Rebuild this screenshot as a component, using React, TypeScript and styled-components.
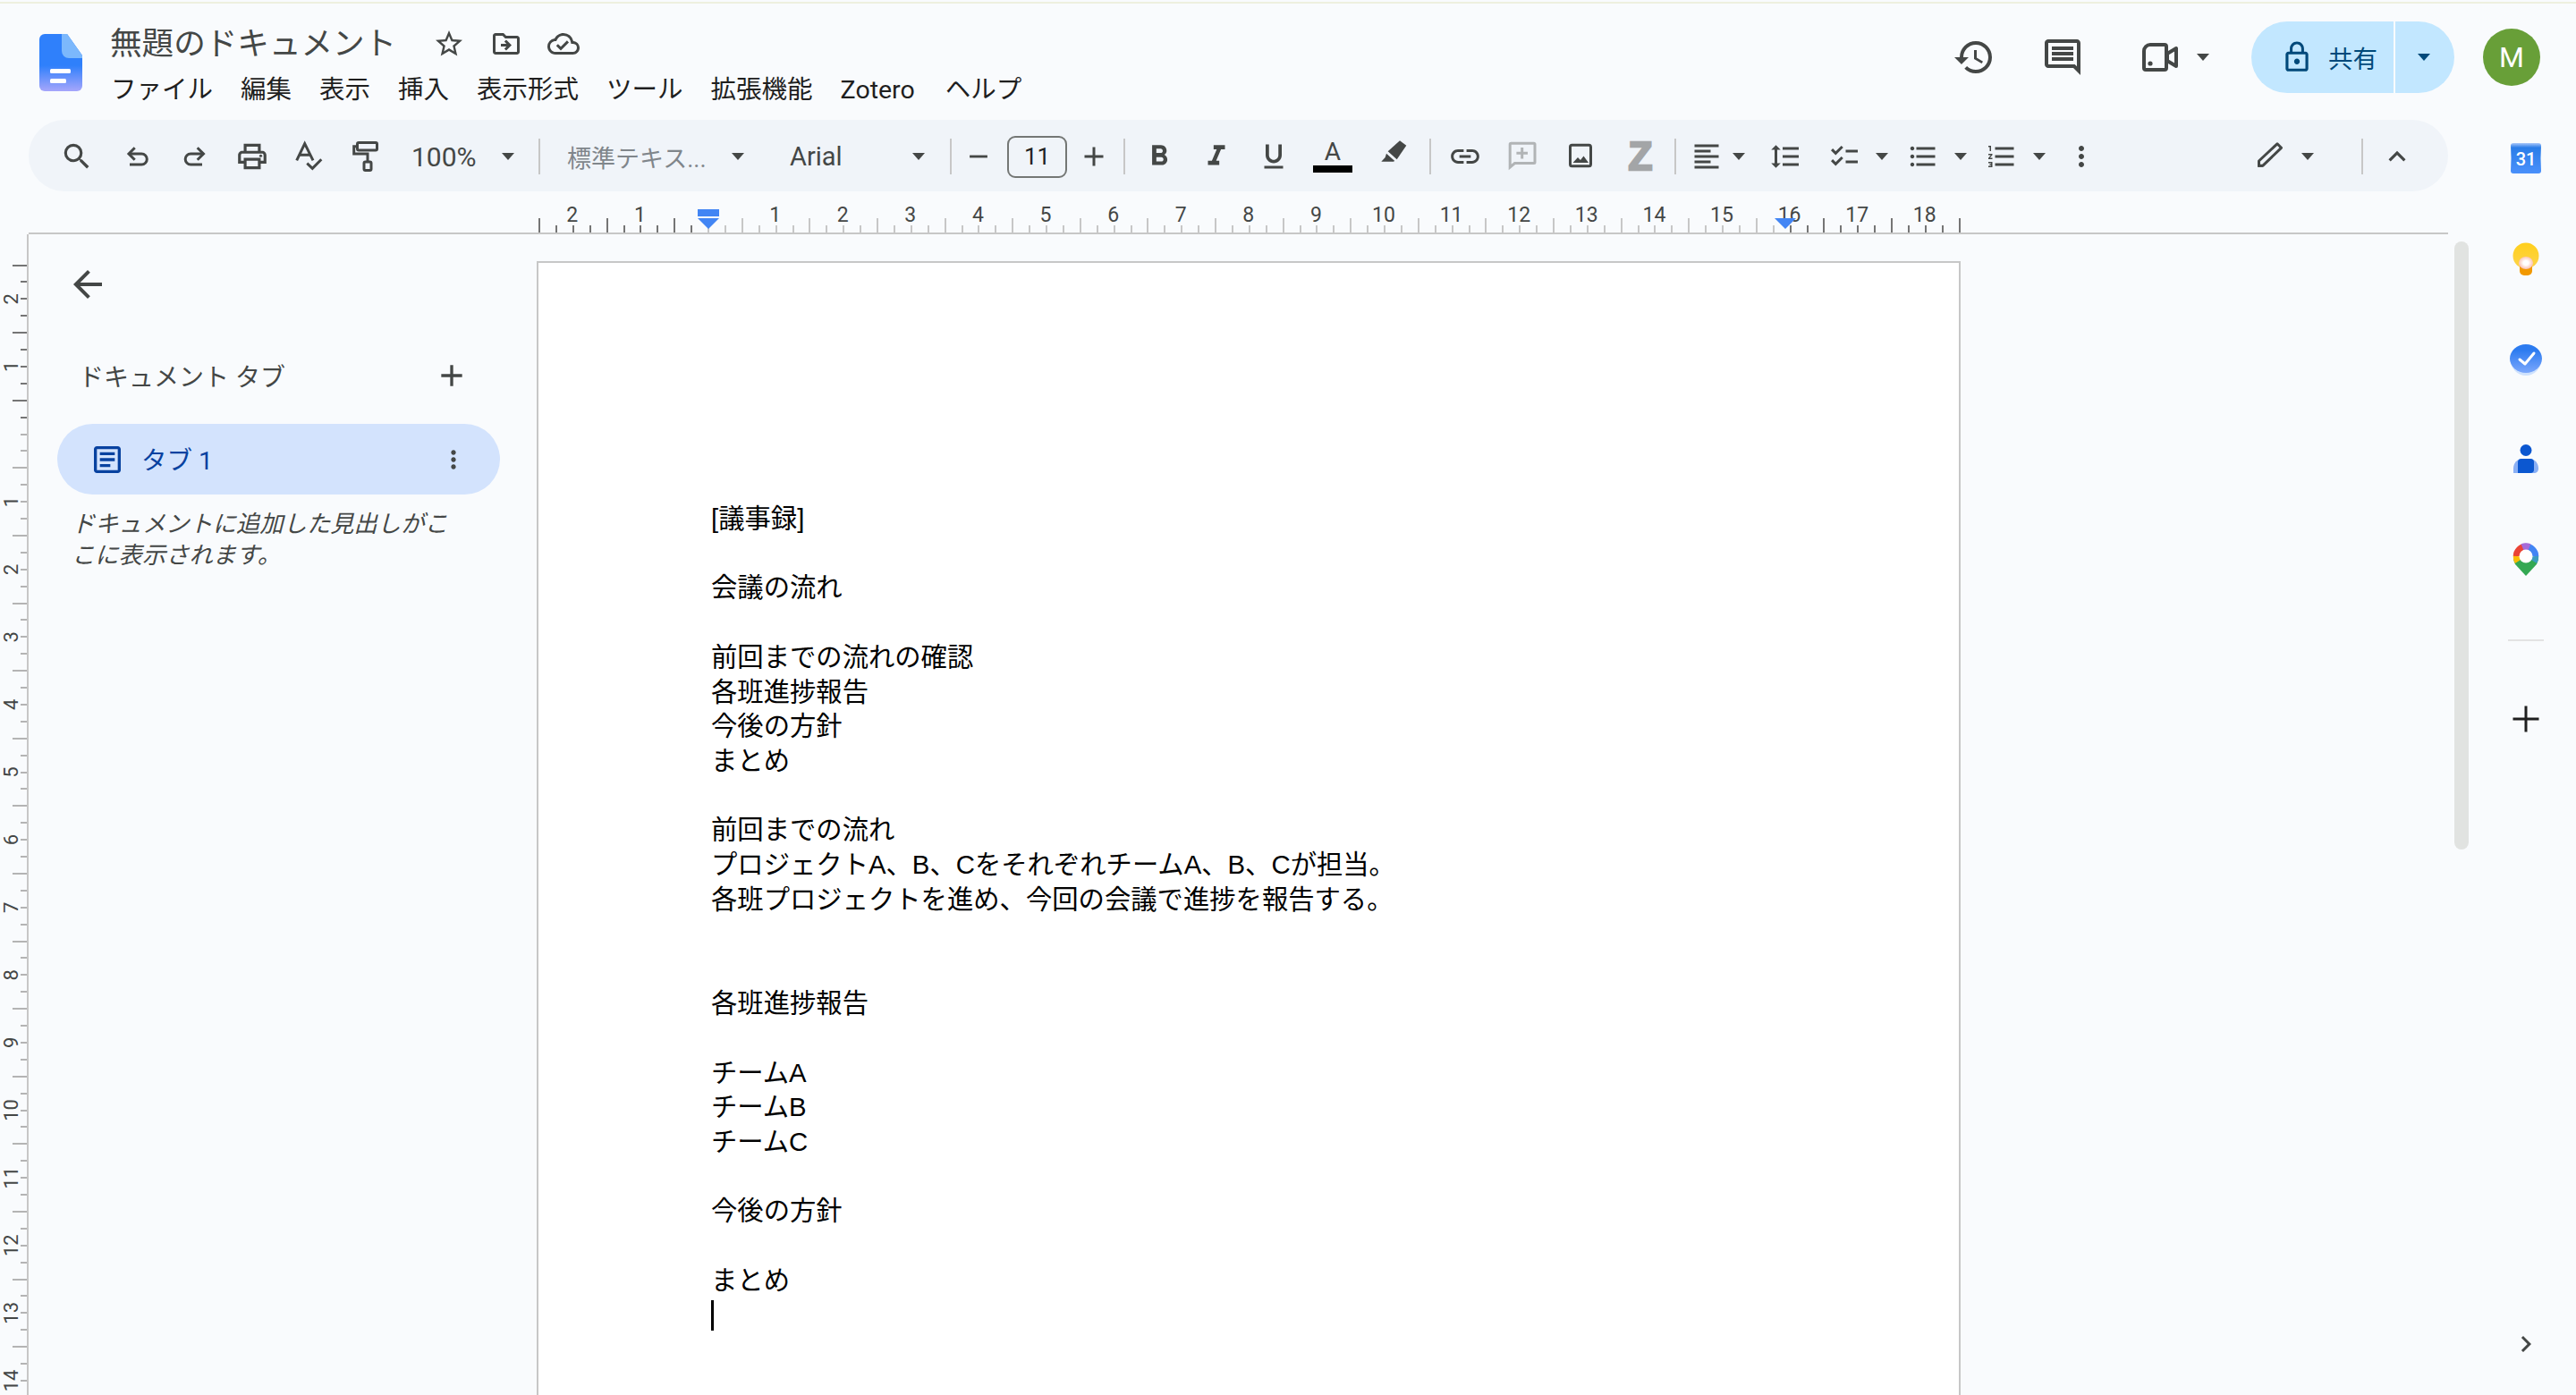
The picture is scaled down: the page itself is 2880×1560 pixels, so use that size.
import * as React from 'react';
import {
  MdAdd,
  MdArrowBack,
  MdChecklist,
  MdChevronRight,
  MdFormatAlignLeft,
  MdFormatBold,
  MdFormatItalic,
  MdFormatLineSpacing,
  MdFormatListBulleted,
  MdFormatListNumbered,
  MdFormatUnderlined,
  MdHistory,
  MdKeyboardArrowUp,
  MdLink,
  MdLockOutline,
  MdMoreVert,
  MdOutlineArticle,
  MdOutlineCloudDone,
  MdOutlineComment,
  MdOutlineDriveFileMove,
  MdOutlinePrint,
  MdRemove,
  MdSearch,
  MdStarBorder,
} from 'react-icons/md';
import styled, { createGlobalStyle } from 'styled-components';

const UI_FONT = '"Roboto", "Noto Sans CJK JP", sans-serif';
const DOC_FONT = '"Liberation Sans", "Noto Sans CJK JP", sans-serif';
const ICON = '#444746';

const GlobalStyle = createGlobalStyle`
  html, body {
    margin: 0;
    padding: 0;
    background: #f9fbfd;
    overflow: hidden;
  }
`;

const Shell = styled.div`
  display: flex;
  flex-direction: column;
  width: 2880px;
  height: 1560px;
  overflow: hidden;
  background: #f9fbfd;
  font-family: ${UI_FONT};
  color: ${ICON};
`;

const TopStrip = styled.div`
  height: 2px;
  margin-top: 2px;
  flex: none;
  background: #eef0df;
`;

const Header = styled.header`
  display: flex;
  flex: none;
  height: 130px;
  padding: 20px 40px 0 44px;
  box-sizing: border-box;
`;

const LogoWrap = styled.div`
  flex: none;
  width: 48px;
  height: 64px;
  margin-top: 14px;
`;

const TitleBlock = styled.div`
  display: flex;
  flex-direction: column;
  margin-left: 31px;
`;

const TitleRow = styled.div`
  display: flex;
  align-items: center;
  gap: 28px;
  height: 46px;
  margin-top: 2px;
`;

const DocTitle = styled.div`
  width: 318px;
  margin-right: 15px;
  font-size: 35.6px;
  line-height: 46px;
  white-space: nowrap;
  color: #444746;
`;

const MenuBar = styled.nav`
  display: flex;
  gap: 31px;
  margin: 10px 0 0 1px;
  font-size: 28.5px;
  line-height: 38px;
  color: #1f1f1f;
  white-space: nowrap;
`;

const MenuItem = styled.span<{ $latin?: boolean }>`
  margin-right: ${(p) => (p.$latin ? 3 : 0)}px;
`;

const HeaderActions = styled.div`
  display: flex;
  align-items: center;
  height: 80px;
  margin-left: auto;
`;

const HeaderIcon = styled.div<{ $w: number }>`
  display: flex;
  align-items: center;
  justify-content: center;
  width: ${(p) => p.$w}px;
`;

const VideoGroup = styled.div`
  display: flex;
  align-items: center;
  gap: 17px;
  padding-left: 35px;
  margin-right: 47px;
`;

const ShareButton = styled.div`
  display: flex;
  width: 227px;
  height: 80px;
  border-radius: 40px;
  overflow: hidden;
  background: #c2e7ff;
  color: #00497a;
`;

const ShareMain = styled.div`
  display: flex;
  align-items: center;
  gap: 16px;
  width: 161px;
  padding-left: 32px;
  box-sizing: border-box;
  border-right: 2px solid #f9fbfd;
  font-size: 27.5px;
`;

const ShareCaret = styled.div`
  display: flex;
  flex: 1;
  align-items: center;
  justify-content: center;
  padding-right: 3px;
`;

const Avatar = styled.div`
  display: flex;
  align-items: center;
  justify-content: center;
  width: 64px;
  height: 64px;
  margin-left: 32px;
  border-radius: 50%;
  background: #689f38;
  color: #fff;
  font-size: 32px;
`;

const Caret = styled.span<{ $color?: string }>`
  flex: none;
  display: block;
  width: 0;
  height: 0;
  border-left: 7.5px solid transparent;
  border-right: 7.5px solid transparent;
  border-top: 8px solid ${(p) => p.$color || ICON};
`;

const Body = styled.div`
  display: flex;
  flex: 1;
  min-height: 0;
`;

const MainColumn = styled.div`
  display: flex;
  flex-direction: column;
  flex: none;
  width: 2768px;
  min-height: 0;
`;

const Toolbar = styled.div`
  display: flex;
  align-items: center;
  flex: none;
  width: 2705px;
  height: 80px;
  margin-left: 32px;
  padding: 2px 0 0 22px;
  box-sizing: border-box;
  border-radius: 40px;
  background: #f0f4f9;
`;

const Tool = styled.div<{ $w: number }>`
  display: flex;
  flex: none;
  align-items: center;
  justify-content: center;
  width: ${(p) => p.$w}px;
  height: 50px;
`;

const ToolGroup = styled.div<{ $w: number; $pl: number; $gap?: number }>`
  display: flex;
  flex: none;
  align-items: center;
  gap: ${(p) => p.$gap ?? 17}px;
  width: ${(p) => p.$w}px;
  height: 50px;
  padding-left: ${(p) => p.$pl}px;
  box-sizing: border-box;
`;

const Select = styled.div<{ $w: number; $pl: number; $caretGap: number; $size: number }>`
  display: flex;
  flex: none;
  align-items: center;
  gap: ${(p) => p.$caretGap}px;
  width: ${(p) => p.$w}px;
  padding-left: ${(p) => p.$pl}px;
  box-sizing: border-box;
  font-size: ${(p) => p.$size}px;
  white-space: nowrap;
`;

const MutedLabel = styled.span`
  color: #80868b;
`;

const Sep = styled.div<{ $ml?: number }>`
  flex: none;
  width: 2px;
  height: 40px;
  margin-left: ${(p) => p.$ml ?? 0}px;
  background: #c7c7c7;
`;

const SizeBox = styled.div`
  display: flex;
  flex: none;
  align-items: center;
  justify-content: center;
  width: 67px;
  height: 47px;
  margin-left: 2px;
  box-sizing: border-box;
  border: 2px solid #747775;
  border-radius: 9px;
  font-size: 26px;
  color: #1f1f1f;
`;

const TextColor = styled.div`
  display: flex;
  flex: none;
  flex-direction: column;
  align-items: center;
  width: 56px;
  font-size: 28px;
  line-height: 26px;
`;

const ColorBar = styled.div`
  width: 44px;
  height: 8px;
  margin-top: 2px;
  background: #000;
`;

const ZoteroMark = styled.div`
  font-family: 'Liberation Sans', sans-serif;
  font-weight: 700;
  font-size: 44px;
  line-height: 50px;
  color: #a3a5a7;
  -webkit-text-stroke: 2.5px #a3a5a7;
`;

const ToolbarRight = styled.div`
  display: flex;
  align-items: center;
  margin-left: auto;
  padding-right: 19px;
`;

const RulerRow = styled.div`
  flex: none;
  height: 48px;
  line-height: 0;
`;

const Workspace = styled.div`
  display: flex;
  flex: 1;
  min-height: 0;
  overflow: hidden;
`;

const VerticalRuler = styled.div`
  flex: none;
  width: 32px;
  line-height: 0;
`;

const Sidebar = styled.aside`
  display: flex;
  flex: none;
  flex-direction: column;
  width: 568px;
  padding-top: 32px;
  box-sizing: border-box;
`;

const BackButton = styled.div`
  display: flex;
  margin-left: 42px;
  height: 48px;
`;

const SideHeading = styled.div`
  display: flex;
  align-items: center;
  justify-content: space-between;
  width: 437px;
  height: 40px;
  margin: 58px 0 0 56px;
  font-size: 28px;
  color: #444746;
`;

const TabPill = styled.div`
  display: flex;
  align-items: center;
  width: 495px;
  height: 79px;
  margin: 34px 0 0 32px;
  padding-left: 36px;
  box-sizing: border-box;
  border-radius: 40px;
  background: #d3e3fd;
  color: #0842a0;
  font-size: 28.5px;
`;

const TabLabel = styled.span`
  flex: 1;
  margin: 0 0 3px 18px;
`;

const TabMenu = styled.span`
  display: flex;
  margin-right: 36px;
  color: #444746;
`;

const SideHint = styled.p`
  width: 430px;
  margin: 16px 0 0 48px;
  font-size: 26.3px;
  line-height: 35px;
  font-style: italic;
  color: #444746;
`;

const Page = styled.main`
  flex: none;
  width: 1592px;
  height: 1400px;
  margin-top: 30px;
  padding: 267px 0 0 193px;
  box-sizing: border-box;
  background: #fff;
  border: 2px solid #c7c7c7;
  font-family: ${DOC_FONT};
  font-size: 29.33px;
  line-height: 38.73px;
  color: #000;
`;

const DocLine = styled.div`
  height: 38.73px;
  white-space: pre;
`;

const TextCursor = styled.div`
  width: 3px;
  height: 34px;
  margin-top: 2px;
  background: #000;
`;

const ScrollTrack = styled.div`
  flex: none;
  width: 16px;
  margin: 8px 8px 0 auto;
`;

const ScrollThumb = styled.div`
  height: 680px;
  border-radius: 8px;
  background: #e1e3e1;
`;

const Rail = styled.aside`
  display: flex;
  flex: 1;
  flex-direction: column;
  align-items: center;
  gap: 76px;
  padding: 25px 0 39px;
  box-sizing: border-box;
`;

const RailIcon = styled.div`
  display: flex;
  width: 36px;
  height: 36px;
  flex: none;
`;

const RailDivider = styled.div`
  width: 40px;
  height: 2px;
  margin: -4px 0 -7px;
  background: #e3e3e3;
`;

const RailBottom = styled.div`
  display: flex;
  margin-top: auto;
`;

const DocsLogo = () => (
  <svg width="48" height="64" viewBox="0 0 48 64">
    <defs>
      <linearGradient id="docsBody" x1="0" y1="0" x2="0" y2="1">
        <stop offset="0.55" stopColor="#2f80fb" />
        <stop offset="1" stopColor="#a6a6fb" />
      </linearGradient>
    </defs>
    <path d="M6 0h25l17 24v34a6 6 0 0 1-6 6H6a6 6 0 0 1-6-6V6a6 6 0 0 1 6-6z" fill="url(#docsBody)" />
    <path d="M25 0h6l17 24v3H33a8 8 0 0 1-8-8z" fill="#7cb8fc" />
    <rect x="12" y="39" width="23" height="5" rx="1.5" fill="#fff" />
    <rect x="12" y="50" width="18" height="5" rx="1.5" fill="#fff" />
  </svg>
);

const VideoIcon = () => (
  <svg width="48" height="48" viewBox="0 0 48 48" fill="none" stroke={ICON} strokeWidth="4" strokeLinejoin="round">
    <path d="M13 10h16a2 2 0 0 1 2 2v24a2 2 0 0 1-2 2H8a2 2 0 0 1-2-2V17a7 7 0 0 1 7-7z" />
    <path d="M32 20l10-6v20l-10-6z" />
    <circle cx="13" cy="31" r="2.6" fill={ICON} stroke="none" />
  </svg>
);

const UndoIcon = () => (
  <svg width="36" height="36" viewBox="0 0 36 36" fill="none" stroke={ICON} strokeWidth="3">
    <path d="M14.7 8.3L8 15l6.7 6.7" />
    <path d="M8 15h14.3a6 6 0 0 1 0 12H9" />
  </svg>
);

const RedoIcon = () => (
  <svg width="36" height="36" viewBox="0 0 36 36" fill="none" stroke={ICON} strokeWidth="3">
    <path d="M21.7 8.3L28.5 15l-6.8 6.7" />
    <path d="M28.5 15H14.2a6 6 0 0 0 0 12H27" />
  </svg>
);

const SpellcheckIcon = () => (
  <svg width="36" height="36" viewBox="0 0 36 36" fill="none" stroke={ICON} strokeWidth="3">
    <path d="M3.7 22.3L12.7 3.7 22 22.3M7 16.3h11.7" />
    <path d="M15.3 25.7l6 5.6 10-10" />
  </svg>
);

const PaintIcon = () => (
  <svg width="36" height="36" viewBox="0 0 36 36" fill="none" stroke={ICON} strokeWidth="3">
    <rect x="10.5" y="2.5" width="22" height="8.5" rx="1.5" />
    <path d="M10 6.7H6.7V15H22v8.7" />
    <rect x="18" y="24" width="8" height="9.5" rx="1.5" />
  </svg>
);

const HighlightIcon = () => (
  <svg width="36" height="36" viewBox="0 -2 36 36" fill={ICON}>
    <path d="M25-1.7l7.3 5.4L21.7 19.3l-10-9z" />
    <path d="M10 12.7l9.3 8.3-1.5.7H4.3L8.7 17z" />
  </svg>
);

const AddCommentIcon = () => (
  <svg width="36" height="36" viewBox="0 0 36 36" fill="none" stroke="#b1b4b6" strokeWidth="3">
    <path d="M5 3.2h26a1 1 0 0 1 1 1V24.5a1 1 0 0 1-1 1H9.5L4.2 30V4.2a1 1 0 0 1 1-1z" />
    <path d="M17.7 8v12.6M11.4 14.3H24" />
  </svg>
);

const ImageIcon = () => (
  <svg width="36" height="36" viewBox="0 0 36 36" fill="none" stroke={ICON} strokeWidth="3">
    <rect x="6.5" y="5.2" width="23" height="23.6" rx="2" />
    <path d="M9.5 25l5.5-6 3 3 3.5-4.5 5.5 7.5z" fill={ICON} stroke="none" />
  </svg>
);

const PencilIcon = () => (
  <svg width="36" height="36" viewBox="0 0 36 36" fill="none" stroke={ICON} strokeWidth="3" strokeLinejoin="round">
    <path d="M5.5 23L26 3.8l4.5 4.5L10 28.2H5.500z" />
    <path d="M4 24.500v5.200h6.500z" fill={ICON} stroke="none" />
  </svg>
);

const CalendarIcon = () => (
  <svg width="36" height="36" viewBox="0 0 36 36">
    <defs>
      <linearGradient id="calBody" x1="0" y1="0" x2="0" y2="1">
        <stop offset="0" stopColor="#a8c7fa" />
        <stop offset="0.15" stopColor="#2a7de8" />
        <stop offset="1" stopColor="#4a90fb" />
      </linearGradient>
    </defs>
    <path d="M4 1h28q3 0 3 3-1 14 0 28 0 3-3 3H4q-3 0-3-3 1-14 0-28 0-3 3-3z" fill="url(#calBody)" />
    <text x="18" y="26" textAnchor="middle" fill="#fff" fontSize="20" fontFamily="Roboto, sans-serif" fontWeight="500">
      31
    </text>
  </svg>
);

const KeepIcon = () => (
  <svg width="36" height="38" viewBox="0 0 36 38">
    <defs>
      <linearGradient id="keepBody" x1="0" y1="0" x2="0" y2="1">
        <stop offset="0" stopColor="#ffcf1c" />
        <stop offset="1" stopColor="#fdd44a" />
      </linearGradient>
      <radialGradient id="keepGlow">
        <stop offset="0.35" stopColor="#fff" />
        <stop offset="1" stopColor="#fbc4c4" stopOpacity="0.9" />
      </radialGradient>
    </defs>
    <circle cx="18" cy="15" r="14.5" fill="url(#keepBody)" />
    <path d="M11 24h14v8a5 5 0 0 1-5 5h-4a5 5 0 0 1-5-5z" fill="#f29900" />
    <ellipse cx="18" cy="23" rx="8" ry="7" fill="url(#keepGlow)" />
  </svg>
);

const TasksIcon = () => (
  <svg width="36" height="38" viewBox="0 0 36 38">
    <defs>
      <linearGradient id="tasksBody" x1="0" y1="0" x2="0" y2="1">
        <stop offset="0.2" stopColor="#2c7bf0" />
        <stop offset="1" stopColor="#7ba7fc" />
      </linearGradient>
    </defs>
    <ellipse cx="18" cy="20" rx="17" ry="17" fill="#cfe2fd" />
    <ellipse cx="18" cy="18" rx="18" ry="16" fill="url(#tasksBody)" />
    <path d="M11 19l6 5 10-12" fill="none" stroke="#fff" strokeWidth="3" strokeLinecap="round" strokeLinejoin="round" />
  </svg>
);

const ContactsIcon = () => (
  <svg width="36" height="36" viewBox="0 0 36 36">
    <path d="M4 34v-5c0-6 4-11 10-11h8c6 0 10 5 10 11 0 3-2 5-5 5z" fill="#8ab0f5" />
    <circle cx="18" cy="8.5" r="6.5" fill="#0b57d0" />
    <path d="M9 34V22q0-4 4-4h10q4 0 4 4v8q0 4-4 4z" fill="#0b57d0" />
  </svg>
);

const MapsIcon = () => (
  <svg width="36" height="38" viewBox="0 0 36 38" fill="none" strokeWidth="7.5">
    <path d="M18 37L6 24a15 15 0 0 1-2-8h28a15 15 0 0 1-2 8z" fill="#34a853" />
    <path d="M7.5 15a10.5 10.5 0 0 1 10.5-10.5" stroke="#ea4335" />
    <path d="M9 21a10.5 10.5 0 0 1-1.5-6" stroke="#fbbc04" />
    <path d="M18 4.5a10.5 10.5 0 0 1 10.5 10.5" stroke="#4285f4" />
    <path d="M14 4.8a10.5 10.5 0 0 1 8 0" stroke="#a56bd8" />
    <path d="M28.5 15a10.5 10.5 0 0 1-1.5 6" stroke="#3b9dbf" />
    <circle cx="18" cy="15" r="7.5" fill="#fff" stroke="none" />
  </svg>
);

const RailPlus = () => (
  <svg width="36" height="36" viewBox="0 0 36 36" fill="none" stroke="#1f1f1f" strokeWidth="3">
    <path d="M18 3.500v29M3.500 18h29" />
  </svg>
);

const TICK_STEP = 18.9;
const H_ORIGIN = 791;
const V_ORIGIN = 222.5;

const HRuler = () => {
  const ticks = [];
  for (let k = -10; k <= 74; k++) {
    const x = H_ORIGIN + TICK_STEP * k;
    const long = k % 4 !== 0 && k % 2 === 0;
    const dark = x < H_ORIGIN || x > 1998;
    ticks.push(
      <rect key={k} x={Math.round(x)} y={long ? 30 : 38} width="2" height={long ? 16 : 8} fill={dark ? '#757575' : '#c7c7c7'} />
    );
    if (k % 4 === 0 && k !== 0) {
      ticks.push(
        <text key={`n${k}`} x={x} y="34" textAnchor="middle" fontSize="23" fill={ICON} fontFamily="Roboto, sans-serif">
          {Math.abs(k / 4)}
        </text>
      );
    }
  }
  return (
    <svg width="2737" height="48" viewBox="0 0 2737 48">
      {ticks}
      <rect x="32" y="46" width="2705" height="2" fill="#c7c7c7" />
      <rect x="780" y="20" width="24" height="8" fill="#4285f4" />
      <path d="M780 30h24l-12 12z" fill="#4285f4" />
      <path d="M1984 30h24l-12 12z" fill="#4285f4" />
    </svg>
  );
};

const VRuler = () => {
  const ticks = [];
  for (let k = -10; k <= 56; k++) {
    const y = V_ORIGIN + TICK_STEP * k;
    const long = k % 4 !== 0 && k % 2 === 0;
    ticks.push(
      <rect key={k} x={long ? 14 : 23} y={Math.round(y)} width={long ? 17 : 8} height="2" fill={k < 0 ? '#757575' : '#b4b4b4'} />
    );
    if (k % 4 === 0 && k !== 0) {
      ticks.push(
        <text
          key={`n${k}`}
          transform={`translate(20 ${y + 1}) rotate(-90)`}
          textAnchor="middle"
          fontSize="22"
          fill={ICON}
          fontFamily="Roboto, sans-serif">
          {Math.abs(k / 4)}
        </text>
      );
    }
  }
  return (
    <svg width="32" height="1298" viewBox="0 0 32 1298">
      {ticks}
      <rect x="30" y="0" width="2" height="1298" fill="#c7c7c7" />
    </svg>
  );
};

const menuItems = ['ファイル', '編集', '表示', '挿入', '表示形式', 'ツール', '拡張機能', 'Zotero', 'ヘルプ'];

const docLines = [
  '[議事録]',
  '',
  '会議の流れ',
  '',
  '前回までの流れの確認',
  '各班進捗報告',
  '今後の方針',
  'まとめ',
  '',
  '前回までの流れ',
  'プロジェクトA、B、CをそれぞれチームA、B、Cが担当。',
  '各班プロジェクトを進め、今回の会議で進捗を報告する。',
  '',
  '',
  '各班進捗報告',
  '',
  'チームA',
  'チームB',
  'チームC',
  '',
  '今後の方針',
  '',
  'まとめ',
];

export default function App() {
  return (
    <Shell>
      <GlobalStyle />
      <TopStrip />
      <Header>
        <LogoWrap>
          <DocsLogo />
        </LogoWrap>
        <TitleBlock>
          <TitleRow>
            <DocTitle>無題のドキュメント</DocTitle>
            <MdStarBorder size={36} />
            <MdOutlineDriveFileMove size={36} />
            <MdOutlineCloudDone size={36} />
          </TitleRow>
          <MenuBar>
            {menuItems.map((m) => (
              <MenuItem key={m} $latin={m === 'Zotero'}>
                {m}
              </MenuItem>
            ))}
          </MenuBar>
        </TitleBlock>
        <HeaderActions>
          <HeaderIcon $w={98}>
            <MdHistory size={48} />
          </HeaderIcon>
          <HeaderIcon $w={100}>
            <MdOutlineComment size={48} />
          </HeaderIcon>
          <VideoGroup>
            <VideoIcon />
            <Caret />
          </VideoGroup>
          <ShareButton>
            <ShareMain>
              <MdLockOutline size={38} />
              共有
            </ShareMain>
            <ShareCaret>
              <Caret $color="#00497a" />
            </ShareCaret>
          </ShareButton>
          <Avatar>M</Avatar>
        </HeaderActions>
      </Header>
      <Body>
        <MainColumn>
          <Toolbar>
            <Tool $w={64}>
              <MdSearch size={38} />
            </Tool>
            <Tool $w={72}>
              <UndoIcon />
            </Tool>
            <Tool $w={54}>
              <RedoIcon />
            </Tool>
            <Tool $w={76}>
              <MdOutlinePrint size={38} />
            </Tool>
            <Tool $w={52}>
              <SpellcheckIcon />
            </Tool>
            <Tool $w={70}>
              <PaintIcon />
            </Tool>
            <Select $w={160} $pl={18} $caretGap={28} $size={30}>
              100%
              <Caret />
            </Select>
            <Sep />
            <Select $w={254} $pl={30} $caretGap={28} $size={27}>
              <MutedLabel>標準テキス...</MutedLabel>
              <Caret />
            </Select>
            <Select $w={204} $pl={25} $caretGap={78} $size={29}>
              Arial
              <Caret />
            </Select>
            <Sep />
            <Tool $w={60}>
              <MdRemove size={34} />
            </Tool>
            <SizeBox>11</SizeBox>
            <Tool $w={60}>
              <MdAdd size={36} />
            </Tool>
            <Sep $ml={3} />
            <Tool $w={76}>
              <MdFormatBold size={38} />
            </Tool>
            <Tool $w={52}>
              <MdFormatItalic size={38} />
            </Tool>
            <Tool $w={76}>
              <MdFormatUnderlined size={36} />
            </Tool>
            <TextColor>
              A
              <ColorBar />
            </TextColor>
            <Tool $w={80}>
              <HighlightIcon />
            </Tool>
            <Sep />
            <Tool $w={76}>
              <MdLink size={38} />
            </Tool>
            <Tool $w={52}>
              <AddCommentIcon />
            </Tool>
            <Tool $w={78}>
              <ImageIcon />
            </Tool>
            <Tool $w={56}>
              <ZoteroMark>Z</ZoteroMark>
            </Tool>
            <Sep $ml={10} />
            <ToolGroup $w={88} $pl={16} $gap={11}>
              <MdFormatAlignLeft size={36} />
              <Caret />
            </ToolGroup>
            <Tool $w={68}>
              <MdFormatLineSpacing size={36} />
            </Tool>
            <ToolGroup $w={94} $pl={14}>
              <MdChecklist size={36} />
              <Caret />
            </ToolGroup>
            <ToolGroup $w={88} $pl={8}>
              <MdFormatListBulleted size={36} />
              <Caret />
            </ToolGroup>
            <ToolGroup $w={88} $pl={8}>
              <MdFormatListNumbered size={36} />
              <Caret />
            </ToolGroup>
            <Tool $w={54}>
              <MdMoreVert size={36} />
            </Tool>
            <ToolbarRight>
              <ToolGroup $w={120} $pl={0}>
                <PencilIcon />
                <Caret />
              </ToolGroup>
              <Sep />
              <Tool $w={76}>
                <MdKeyboardArrowUp size={38} />
              </Tool>
            </ToolbarRight>
          </Toolbar>
          <RulerRow>
            <HRuler />
          </RulerRow>
          <Workspace>
            <VerticalRuler>
              <VRuler />
            </VerticalRuler>
            <Sidebar>
              <BackButton>
                <MdArrowBack size={48} />
              </BackButton>
              <SideHeading>
                ドキュメント タブ
                <MdAdd size={40} />
              </SideHeading>
              <TabPill>
                <MdOutlineArticle size={40} />
                <TabLabel>タブ 1</TabLabel>
                <TabMenu>
                  <MdMoreVert size={32} />
                </TabMenu>
              </TabPill>
              <SideHint>ドキュメントに追加した見出しがここに表示されます。</SideHint>
            </Sidebar>
            <Page>
              {docLines.map((line, i) => (
                <DocLine key={i}>{line}</DocLine>
              ))}
              <TextCursor />
            </Page>
            <ScrollTrack>
              <ScrollThumb />
            </ScrollTrack>
          </Workspace>
        </MainColumn>
        <Rail>
          <RailIcon>
            <CalendarIcon />
          </RailIcon>
          <RailIcon>
            <KeepIcon />
          </RailIcon>
          <RailIcon>
            <TasksIcon />
          </RailIcon>
          <RailIcon>
            <ContactsIcon />
          </RailIcon>
          <RailIcon>
            <MapsIcon />
          </RailIcon>
          <RailDivider />
          <RailIcon>
            <RailPlus />
          </RailIcon>
          <RailBottom>
            <MdChevronRight size={36} />
          </RailBottom>
        </Rail>
      </Body>
    </Shell>
  );
}
